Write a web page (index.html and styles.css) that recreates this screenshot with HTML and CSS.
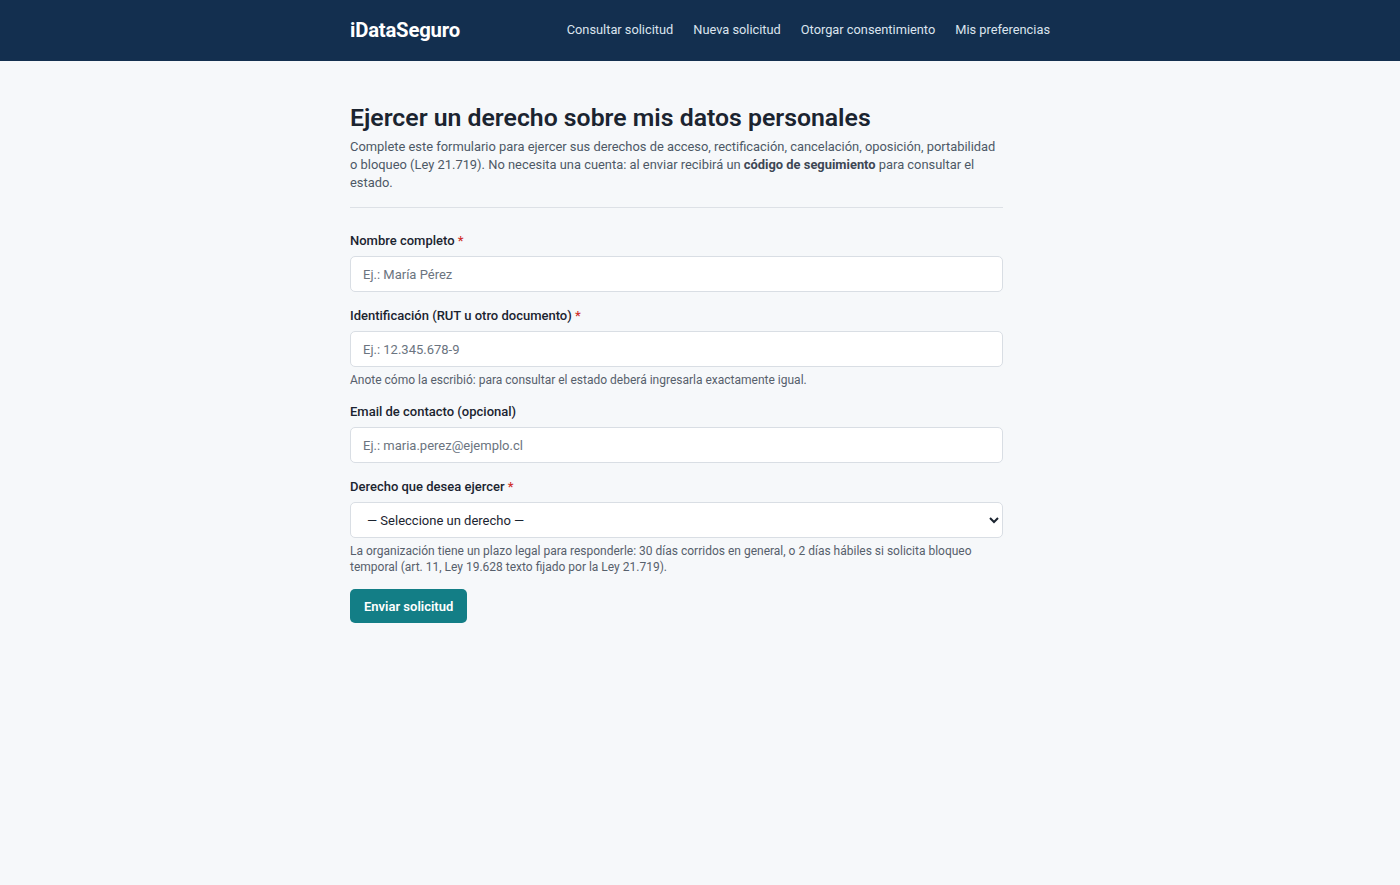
FILE: index.html
```html
<!DOCTYPE html>
<html lang="es">
<head>
<meta charset="utf-8">
<title>iDataSeguro</title>
<link rel="stylesheet" href="styles.css">
</head>
<body>
<header class="topbar">
  <div class="topbar-inner">
    <a class="brand" href="#">iDataSeguro</a>
    <nav class="nav">
      <a href="#">Consultar solicitud</a>
      <a href="#">Nueva solicitud</a>
      <a href="#">Otorgar consentimiento</a>
      <a href="#">Mis preferencias</a>
    </nav>
  </div>
</header>
<main class="page">
  <div class="content">
    <h1 class="title">Ejercer un derecho sobre mis datos personales</h1>
    <p class="lead">Complete este formulario para ejercer sus derechos de acceso, rectificación, cancelación, oposición, portabilidad o bloqueo (Ley 21.719). No necesita una cuenta: al enviar recibirá un <strong>código de seguimiento</strong> para consultar el estado.</p>
    <hr class="divider">
    <form class="form">
      <div class="field">
        <label class="label" for="nombre">Nombre completo <span class="req">*</span></label>
        <input class="input" id="nombre" type="text" placeholder="Ej.: María Pérez">
      </div>
      <div class="field">
        <label class="label" for="ident">Identificación (RUT u otro documento) <span class="req">*</span></label>
        <input class="input" id="ident" type="text" placeholder="Ej.: 12.345.678-9">
        <p class="hint">Anote cómo la escribió: para consultar el estado deberá ingresarla exactamente igual.</p>
      </div>
      <div class="field">
        <label class="label" for="email">Email de contacto (opcional)</label>
        <input class="input" id="email" type="email" placeholder="Ej.: maria.perez@ejemplo.cl">
      </div>
      <div class="field">
        <label class="label" for="derecho">Derecho que desea ejercer <span class="req">*</span></label>
        <select class="input select" id="derecho">
          <option>— Seleccione un derecho —</option>
          <option>Acceso</option>
          <option>Rectificación</option>
          <option>Cancelación</option>
          <option>Oposición</option>
          <option>Portabilidad</option>
          <option>Bloqueo</option>
        </select>
        <p class="hint">La organización tiene un plazo legal para responderle: 30 días corridos en general, o 2 días hábiles si solicita bloqueo temporal (art. 11, Ley 19.628 texto fijado por la Ley 21.719).</p>
      </div>
      <button class="btn" type="button">Enviar solicitud</button>
    </form>
  </div>
</main>
</body>
</html>
```

FILE: styles.css
```css
* { box-sizing: border-box; }
html, body { margin: 0; padding: 0; }
body {
  background: #f6f8fa;
  font-family: Roboto, "Liberation Sans", sans-serif;
  color: #1b2430;
  min-height: 885px;
}
.topbar {
  background: #132f4f;
  height: 61px;
}
.topbar-inner {
  width: 700px;
  margin: 0 auto;
  height: 100%;
  display: flex;
  align-items: center;
  justify-content: space-between;
  padding-bottom: 2px;
}
.brand {
  color: #ffffff;
  font-weight: 700;
  font-size: 20.3px;
  text-decoration: none;
  letter-spacing: -0.2px;
}
.nav {
  display: flex;
  gap: 20px;
}
.nav a {
  color: #dbe4ee;
  text-decoration: none;
  font-size: 12.8px;
}
.page {
  width: 700px;
  margin: 0 auto;
  padding-top: 41px;
}
.content {
  width: 653px;
}
.title {
  margin: 0;
  font-size: 24.8px;
  font-weight: 600;
  line-height: 32px;
  color: #1b2430;
}
.lead {
  margin: 4px 0 0;
  font-size: 12.9px;
  line-height: 18px;
  color: #4d5866;
}
.lead strong { color: #3d4754; font-weight: 700; }
.divider {
  border: 0;
  border-top: 1px solid #dde1e6;
  margin: 15px 0 24px;
}
.form { display: flex; flex-direction: column; }
.field {
  display: flex;
  flex-direction: column;
  margin-bottom: 14px;
}
.field + .field { margin-top: 1px; }
.label {
  font-size: 13px;
  font-weight: 500;
  line-height: 18px;
  color: #1b2430;
  margin-bottom: 6px;
}
.req { color: #d0312d; }
.input {
  height: 36px;
  width: 100%;
  border: 1px solid #d9dee4;
  border-radius: 5px;
  background: #ffffff;
  padding: 0 12px;
  font-family: inherit;
  font-size: 13px;
  color: #1b2430;
}
.input::placeholder { color: #6b7480; }
.select {
  padding: 0 8px 0 12px;
  color: #1b2430;
}
.hint {
  margin: 5px 0 0;
  font-size: 12px;
  line-height: 16px;
  color: #56606c;
}
.btn {
  align-self: flex-start;
  margin-top: 0;
  height: 34px;
  padding: 0 14px;
  border: 0;
  border-radius: 5px;
  background: #137e86;
  color: #ffffff;
  font-family: inherit;
  font-size: 13px;
  font-weight: 600;
}
```
